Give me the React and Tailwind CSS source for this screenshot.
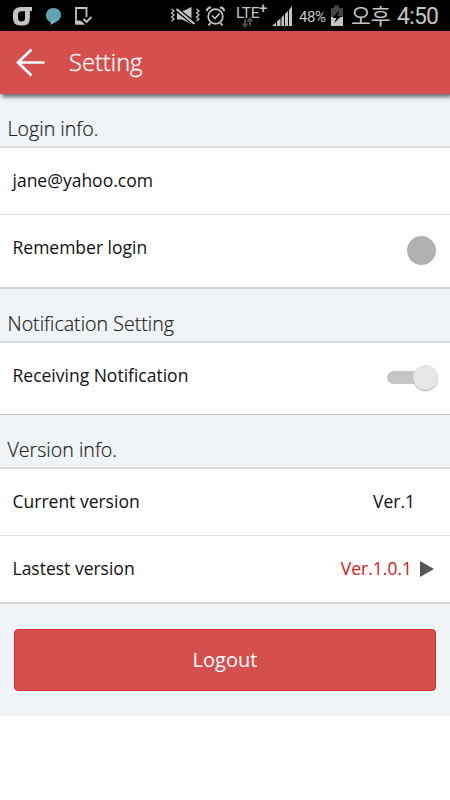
const STATUS_GRAY = '#c4c4c4'

function StatusBar() {
  return (
    <div className="relative h-[31px] w-full bg-black">
      <svg className="block" width="450" height="31" viewBox="0 0 450 31" fill="none">
        {/* carrier mark */}
        <path fillRule="evenodd" d="M32 7V11H29.800V18.500Q29.800 25.500 23 25.500H20.500Q13 25.500 13 18V15Q13 7 21 7ZM21.500 11.300Q18 11.300 18 15V18Q18 21.500 21.500 21.500Q25 21.500 25 18V11.300Z" fill={STATUS_GRAY} />
        {/* message bubble */}
        <path d="M46 15.500C46 11 49 8 53.500 8S61 11 61 15.200C61 20 56 22.500 50 24.700L51.500 22.500C48 21.500 46 19 46 15.500Z" fill="#60a4b3" />
        <path d="M50 24.700L52 21L55 20.500Z" fill="#9bd5df" />
        {/* device with check */}
        <path d="M76 24V8H86.500V17" stroke={STATUS_GRAY} strokeWidth="1.800" />
        <path d="M75.200 20.500H80L83 22.500L85 24.800H75.200Z" fill={STATUS_GRAY} />
        <path d="M83.500 19L86.500 22L91.500 17" stroke={STATUS_GRAY} strokeWidth="1.800" />
        {/* vibrate, muted */}
        <g stroke={STATUS_GRAY} strokeWidth="1.200">
          <path d="M171.500 9L174 11L171.500 13L174 15L171.500 17L174 19L171.500 21M196.500 9L199 11L196.500 13L199 15L196.500 17L199 19L196.500 21" />
          <path d="M177 11.500H182L191.500 7V24L182 19.500H177Z" fill={STATUS_GRAY} stroke="none" />
          <path d="M176 9L195 24" stroke="black" strokeWidth="4.500" />
          <path d="M176.500 9L194.500 24" strokeWidth="2.200" />
        </g>
        {/* alarm */}
        <g stroke={STATUS_GRAY} strokeWidth="1.700">
          <circle cx="215.500" cy="16.500" r="7.300" />
          <path d="M207 11Q207 7.500 211 7.500M220 7.500Q224 7.500 224 11M210.500 23L208.500 25.500M220.500 23L222.500 25.500" strokeWidth="2" />
          <path d="M212 15.500L215 18.500L219.500 13.500" />
        </g>
        {/* data arrows */}
        <path d="M245 19V26M242.500 23.500L245 26.500L247.500 23.500M250 26V19M247.500 21.500L250 18.500L252.500 21.500" stroke="#505050" strokeWidth="1.800" />
        {/* signal strength */}
        <g fill={STATUS_GRAY}>
          <path d="M272 26L276 22.500V26Z" />
          <path d="M277 21.500L280.500 18.500V26H277Z" />
          <path d="M281.500 17.500L284 15V26H281.500Z" />
          <path d="M285 14L288 11V26H285Z" />
          <path d="M289 10L292 6V26H289Z" />
        </g>
        {/* battery */}
        <path d="M331 8H334V5.500H339V8H343V26H331Z" fill="#454545" />
        <path d="M331 17H343V26H331Z" fill={STATUS_GRAY} />
        <path d="M339.500 10L332.500 18H336.500L334 23L341.500 16H337.500Z" fill="black" />
      </svg>
      <span className="absolute left-[236px] top-[5px] font-['Roboto'] text-[15.500px] leading-[17px] tracking-[-0.4px] text-[#c4c4c4]">LTE</span>
      <span className="absolute left-[259px] top-0 font-['Roboto'] text-[15px] font-medium leading-[16px] text-[#c4c4c4]">+</span>
      <span className="absolute left-[299px] top-[9px] font-['Roboto'] text-[15px] leading-[17px] tracking-[-0.4px] text-[#c4c4c4]">48%</span>
      <span className="absolute left-[351px] top-[3px] font-['Noto_Sans_CJK_KR',sans-serif] text-[21.500px] leading-[24px] text-[#c4c4c4]">오후</span>
      <span className="absolute left-[397px] top-[4px] font-['Roboto'] text-[23px] leading-[25px] tracking-[-0.8px] text-[#c4c4c4]">4:50</span>
    </div>
  )
}

function SectionTitle({ children }) {
  return (
    <div className="flex h-[54px] items-end border-b-2 border-[#d9dcde] pb-[5px] pl-[7.500px] text-[19.600px] font-light leading-6 text-[#222] [-webkit-text-stroke:0.2px_#222]">
      {children}
    </div>
  )
}

function Row({ label, className, children }) {
  return (
    <div className={`flex items-start justify-between bg-white pl-[12.500px] ${className}`}>
      <span className="text-[17.500px] leading-6 text-[#111]">{label}</span>
      {children}
    </div>
  )
}

export default function App() {
  return (
    <div className="h-[800px] w-[450px] overflow-hidden bg-white font-['Open_Sans',sans-serif]">
      <StatusBar />
      <header className="relative flex h-[63px] items-center bg-[#d64f4f] pl-4 text-white shadow-[2px_3px_4px_rgba(50,65,70,0.75)]">
        <svg width="29" height="29" viewBox="0 0 29 29" fill="none" stroke="white" strokeWidth="2.600">
          <path d="M15.500 1.500L2 14.500L15.500 27.500M1.500 14.500H28.500" />
        </svg>
        <h1 className="mb-[2px] ml-6 text-[23.700px] font-light leading-8 [-webkit-text-stroke:0.3px_white]">Setting</h1>
      </header>
      <main className="h-[622px] bg-[#f0f4f7]">
        <SectionTitle>Login info.</SectionTitle>
        <Row label="jane@yahoo.com" className="h-[67px] border-b border-[#dedede] pt-[19.500px]" />
        <Row label="Remember login" className="h-[74px] border-b-2 border-[#d2d4d6] pt-5">
          <span className="mr-[14px] mt-px size-[29px] rounded-full bg-[#b1b1b1]" />
        </Row>
        <SectionTitle>Notification Setting</SectionTitle>
        <Row label="Receiving Notification" className="h-[72px] border-b border-[#bfc1c3] pt-5">
          <span className="mr-3 mt-2 flex h-[13px] w-[51px] items-center justify-end rounded-full bg-[#c3c5c7]">
            <span className="size-[25px] rounded-full bg-[#e6e6e6] shadow-[0_1px_1px_#aaa]" />
          </span>
        </Row>
        <SectionTitle>Version info.</SectionTitle>
        <Row label="Current version" className="h-[67px] border-b border-[#dedede] pt-5">
          <span className="mr-[35px] text-[17.500px] leading-6 text-[#111]">Ver.1</span>
        </Row>
        <Row label="Lastest version" className="h-[68px] border-b-2 border-[#d2d4d6] pt-5">
          <span className="mr-4 flex items-center gap-2 text-[17.500px] leading-6 text-[#d02020]">
            Ver.1.0.1
            <svg className="mt-0.5" width="14" height="16" viewBox="0 0 14 16">
              <path d="M0 0L14 8L0 16Z" fill="#555" />
            </svg>
          </span>
        </Row>
        <div className="px-[14px] pt-[25px]">
          <button className="h-[62px] w-full rounded border border-[#d92f2f] bg-[#d64f4f] text-[20px] text-white">Logout</button>
        </div>
      </main>
    </div>
  )
}
